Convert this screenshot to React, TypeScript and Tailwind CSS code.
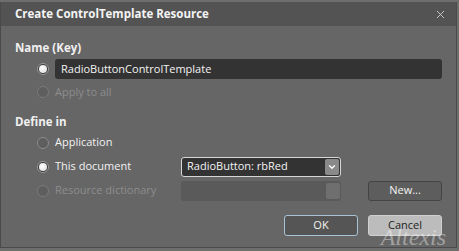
import { X, ChevronDown } from "lucide-react";

const font = { fontFamily: '"Open Sans", "Noto Sans", sans-serif' };

function Radio({ checked, disabled }: { checked?: boolean; disabled?: boolean }) {
  if (checked) {
    return (
      <span className="flex h-[12px] w-[12px] items-center justify-center rounded-full border border-[#9a9a9a] bg-[#3a3a3a]">
        <span className="h-[8px] w-[8px] rounded-full bg-[radial-gradient(circle_at_40%_40%,#ffffff,#d8d8d8)]" />
      </span>
    );
  }
  return (
    <span
      className={`h-[12px] w-[12px] rounded-full border ${disabled ? "border-[#7a7a7a]" : "border-[#8c8c8c]"} bg-[#5e5e5e]`}
    />
  );
}

function RadioRow({ label, checked, disabled }: { label: string; checked?: boolean; disabled?: boolean }) {
  return (
    <div className="flex items-center gap-[6px]">
      <Radio checked={checked} disabled={disabled} />
      <span className={`text-[11px] ${disabled ? "text-[#8d8d8d]" : "text-[#f2f2f2]"}`}>{label}</span>
    </div>
  );
}

export default function App() {
  return (
    <div className="h-[251px] w-[459px] overflow-hidden bg-[#6e6e6e] pt-[2px]" style={font}>
      <div className="relative h-[246px] w-[457px] border-l border-r border-b border-[#4a4a4a] bg-[#666666]">
        {/* title bar */}
        <div className="flex h-[24px] items-center justify-between bg-[#535353] pl-[14px] pr-[9px]">
          <span className="text-[11.5px] font-bold text-[#f4f4f4]">Create ControlTemplate Resource</span>
          <X className="h-[13px] w-[13px] text-[#d8d8d8]" strokeWidth={1.6} />
        </div>

        <div className="px-[14px] pt-[14px]">
          <div className="text-[11.5px] font-bold leading-[16px] text-[#f0f0f0]">Name (Key)</div>

          <div className="mt-[3px] flex flex-col gap-[5px] pl-[22px]">
            <div className="flex items-center gap-[6px]">
              <Radio checked />
              <div className="flex h-[20px] flex-1 items-center rounded-[3px] bg-[#333333] px-[6px] text-[11px] text-[#f4f4f4]">
                RadioButtonControlTemplate
              </div>
            </div>
            <RadioRow label="Apply to all" disabled />
          </div>

          <div className="mt-[13px] text-[11.5px] font-bold leading-[16px] text-[#f0f0f0]">Define in</div>

          <div className="mt-[3px] flex flex-col gap-[4px] pl-[22px]">
            <div className="flex h-[20px] items-center">
              <RadioRow label="Application" />
            </div>
            <div className="flex h-[20px] items-center">
              <div className="w-[144px]">
                <RadioRow label="This document" checked />
              </div>
              <div className="flex h-[20px] w-[160px] items-center justify-between rounded-[3px] border border-[#d6d6d6] bg-[#333333] pl-[5px] pr-[1px]">
                <span className="text-[11px] text-[#f4f4f4]">RadioButton: rbRed</span>
                <span className="flex h-[16px] w-[14px] items-center justify-center rounded-[2px] bg-[#8a8a8a]">
                  <ChevronDown className="h-[10px] w-[10px] text-white" strokeWidth={3} />
                </span>
              </div>
            </div>
            <div className="flex h-[20px] items-center">
              <div className="w-[144px]">
                <RadioRow label="Resource dictionary" disabled />
              </div>
              <div className="flex h-[20px] w-[160px] items-center justify-end rounded-[3px] bg-[#5a5a5a] pr-[1px]">
                <span className="h-[16px] w-[14px] rounded-[2px] bg-[#6f6f6f]" />
              </div>
              <div className="ml-auto flex h-[20px] w-[74px] items-center justify-center rounded-[3px] border border-[#444444] bg-[#5d5d5d] text-[11px] text-[#f4f4f4]">
                New...
              </div>
            </div>
          </div>

          <div className="mt-[14px] flex justify-end gap-[10px]">
            <div className="flex h-[21px] w-[74px] items-center justify-center rounded-[3px] border border-[#a9c3d6] bg-[#555555] text-[11px] text-[#f4f4f4]">
              OK
            </div>
            <div className="flex h-[21px] w-[74px] items-center justify-center rounded-[3px] border border-[#d0d0d0] bg-[#bcbcbc] text-[11px] text-[#1e1e1e]">
              Cancel
            </div>
          </div>
        </div>

        {/* watermark */}
        <span
          className="absolute bottom-[-8px] right-[10px] text-[24px] italic text-white/40"
          style={{ fontFamily: '"Liberation Serif", serif' }}
        >
          Altexis
        </span>
      </div>
    </div>
  );
}
